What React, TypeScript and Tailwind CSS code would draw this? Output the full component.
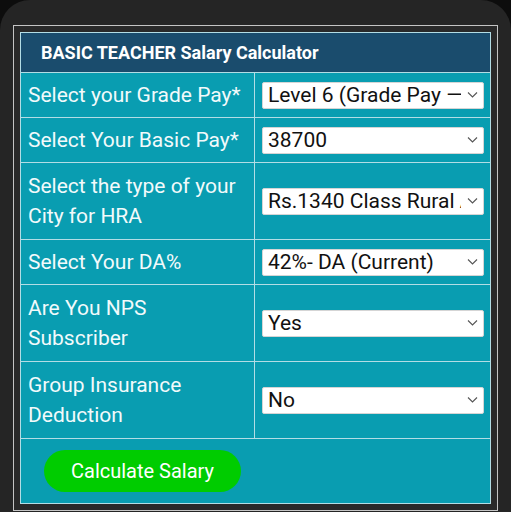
import React, { useState } from 'react';

interface FieldRow {
    label: string;
    value: string;
    options: string[];
    tall?: boolean;
}

const rows: FieldRow[] = [
    {
        label: 'Select your Grade Pay*',
        value: 'Level 6 (Grade Pay — 4200)',
        options: ['Level 6 (Grade Pay — 4200)', 'Level 7 (Grade Pay — 4600)', 'Level 8 (Grade Pay — 4800)'],
    },
    {
        label: 'Select Your Basic Pay*',
        value: '38700',
        options: ['38700', '39900', '41100', '42300'],
    },
    {
        label: 'Select the type of your City for HRA',
        value: 'Rs.1340 Class Rural Area',
        options: ['Rs.1340 Class Rural Area', 'Class X City', 'Class Y City'],
        tall: true,
    },
    {
        label: 'Select Your DA%',
        value: '42%- DA (Current)',
        options: ['42%- DA (Current)', '38%- DA', '34%- DA'],
    },
    {
        label: 'Are You NPS Subscriber',
        value: 'Yes',
        options: ['Yes', 'No'],
        tall: true,
    },
    {
        label: 'Group Insurance Deduction',
        value: 'No',
        options: ['No', 'Yes'],
        tall: true,
    },
];

function Chevron() {
    return (
        <svg
            className="pointer-events-none absolute right-[6px] top-1/2 -translate-y-1/2"
            width="11"
            height="7"
            viewBox="0 0 11 7"
            fill="none"
        >
            <path d="M1 1l4.5 4.5L10 1" stroke="#555" strokeWidth="1.1" />
        </svg>
    );
}

function SelectField({ row }: { row: FieldRow }) {
    const [value, setValue] = useState(row.value);
    return (
        <div className="relative w-full">
            <select
                value={value}
                onChange={(e) => setValue(e.target.value)}
                className="block h-[27px] w-full appearance-none overflow-hidden rounded-[2px] border border-[#d5d5d5] bg-white pl-[5px] pr-[22px] text-[21px] leading-[25px] text-[#111] outline-none"
            >
                {row.options.map((o) => (
                    <option key={o} value={o}>
                        {o}
                    </option>
                ))}
            </select>
            <Chevron />
        </div>
    );
}

export default function App() {
    return (
        <div className="h-[512px] w-full overflow-hidden bg-[#0d0d0d] font-['Roboto',sans-serif]">
            <div className="h-full rounded-t-[30px] bg-[#252525] px-[13px] pt-[25px]">
                <div className="border border-[#c4c4c4] bg-[#292929] p-[6px]">
                    <div className="border border-[#b3dde5] bg-[#099db1]">
                        <div className="flex h-[40px] items-center border-b border-[#b3dde5] bg-[#1a4c6d] pl-[20px] text-[18px] font-bold text-white">
                            BASIC TEACHER Salary Calculator
                        </div>

                        {rows.map((row) => (
                            <div
                                key={row.label}
                                className={`flex border-b border-[#b3dde5] ${row.tall ? 'h-[77px]' : 'h-[45px]'}`}
                            >
                                <div className="flex w-[234px] shrink-0 items-center border-r border-[#b3dde5] px-[7px] text-[21px] leading-[30px] text-[#f2fafb]">
                                    {row.label}
                                </div>
                                <div className="flex flex-1 items-center pl-[7px] pr-[6px]">
                                    <SelectField row={row} />
                                </div>
                            </div>
                        ))}

                        <div className="flex h-[64px] items-center pl-[23px]">
                            <button
                                type="button"
                                className="h-[42px] w-[197px] rounded-full bg-[#00cc00] text-[20px] text-white"
                            >
                                Calculate Salary
                            </button>
                        </div>
                    </div>
                </div>
            </div>
        </div>
    );
}
